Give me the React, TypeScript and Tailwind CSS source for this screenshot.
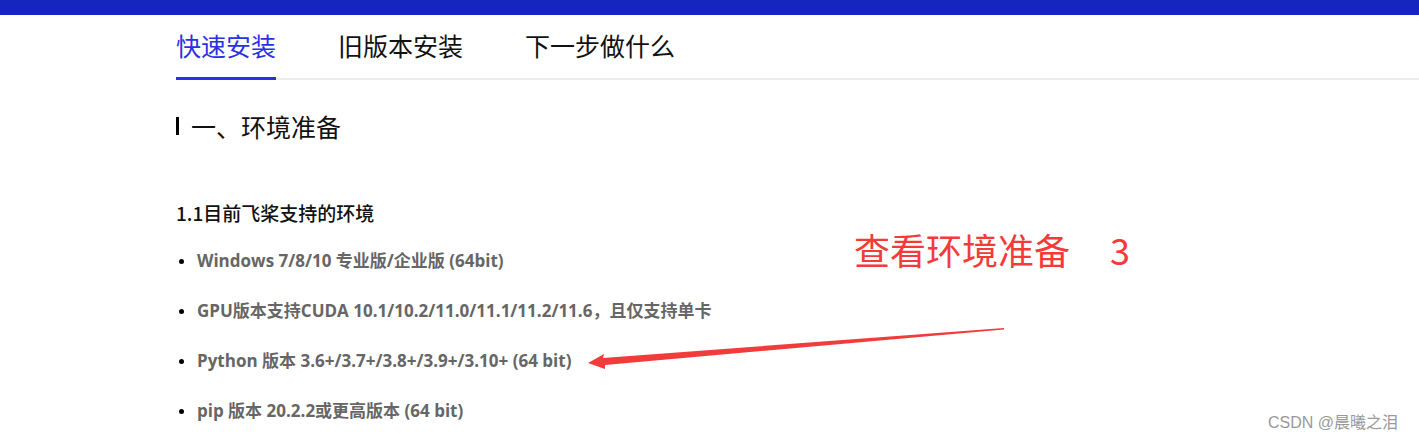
import React from 'react';

const tabs = ['快速安装', '旧版本安装', '下一步做什么'];

const envList = [
  'Windows 7/8/10 专业版/企业版 (64bit)',
  'GPU版本支持CUDA 10.1/10.2/11.0/11.1/11.2/11.6，且仅支持单卡',
  'Python 版本 3.6+/3.7+/3.8+/3.9+/3.10+ (64 bit)',
  'pip 版本 20.2.2或更高版本 (64 bit)',
];

const cjk = { fontFamily: '"Noto Sans CJK SC", "Noto Sans", sans-serif' };
const mixed = { fontFamily: '"Open Sans", "Noto Sans CJK SC", sans-serif' };

const App: React.FC = () => {
  return (
    <div className="relative h-[442px] w-full overflow-hidden bg-white" style={cjk}>
      {/* top bar */}
      <div className="h-[15px] bg-[#1526c0]" />

      {/* tabs */}
      <div className="ml-[176px] flex h-[65px] items-end border-b-2 border-[#ececec]">
        {tabs.map((t, i) => (
          <div
            key={t}
            className={`-mb-[2px] mr-[62px] flex h-[65px] items-center border-b-[3px] pb-[2px] text-[25px] leading-none ${
              i === 0 ? 'border-[#2932e1] text-[#2932e1]' : 'border-transparent text-[#111]'
            }`}
          >
            {t}
          </div>
        ))}
      </div>

      {/* section heading */}
      <div className="ml-[176px] mt-[34px] flex items-center">
        <div className="h-[18px] w-[3px] bg-black" />
        <h2 className="ml-[12px] text-[25px] leading-[24px] text-[#111]">一、环境准备</h2>
      </div>

      {/* sub heading */}
      <div className="ml-[176px] mt-[62px] text-[19px] font-medium leading-[26px] text-[#111]">
        1.1目前飞桨支持的环境
      </div>

      {/* list */}
      <ul className="ml-[176px] mt-[24px] flex flex-col gap-[28px]">
        {envList.map((item) => (
          <li key={item} className="flex h-[22px] items-center">
            <span className="mr-[13px] ml-[3px] h-[5px] w-[5px] rounded-full bg-black" />
            <span className="text-[17px] font-bold leading-[22px] text-[#666]" style={mixed}>
              {item}
            </span>
          </li>
        ))}
      </ul>

      {/* annotation */}
      <div className="absolute left-[854px] top-[225px] text-[36px] leading-[48px] text-[#f53a3a]">
        查看环境准备<span className="ml-[40px]">3</span>
      </div>

      <svg className="absolute left-0 top-0" width="1419" height="442" viewBox="0 0 1419 442">
        <polygon
          points="588,363 604,354 603,358 1004,328 1004,329.5 605,365 605,369"
          fill="#f23c3c"
        />
      </svg>

      {/* watermark */}
      <div className="absolute left-[1268px] top-[413px] text-[16px] leading-[20px] text-[#999]" style={{ fontFamily: '"Liberation Sans", "Noto Sans CJK SC", sans-serif' }}>
        CSDN @晨曦之泪
      </div>
    </div>
  );
};

export default App;
